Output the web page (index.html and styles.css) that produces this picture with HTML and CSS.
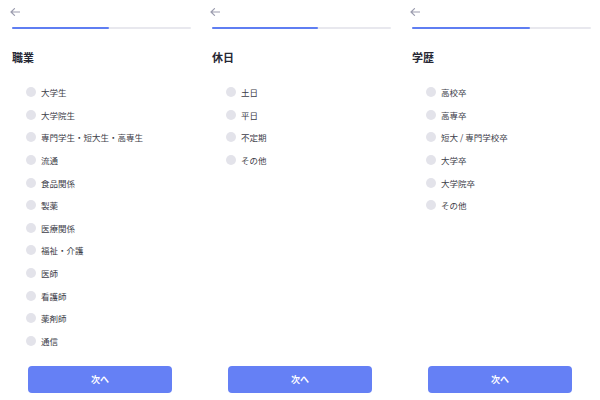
FILE: index.html
```html
<!DOCTYPE html>
<html lang="ja">
<head>
<meta charset="utf-8">
<link rel="stylesheet" href="styles.css">
</head>
<body>
<div class="screens">
  <section class="panel">
    <svg class="back" viewBox="0 0 10 8" width="10" height="8"><path d="M9.5 4H1M4.5 0.6L1 4l3.5 3.4" fill="none" stroke="#9b9cae" stroke-width="1.2" stroke-linecap="round" stroke-linejoin="round"/></svg>
    <div class="progress"><div class="fill" style="width:54%"></div></div>
    <h2 class="title">職業</h2>
    <ul class="options">
      <li><span class="radio"></span>大学生</li>
      <li><span class="radio"></span>大学院生</li>
      <li><span class="radio"></span>専門学生・短大生・高専生</li>
      <li><span class="radio"></span>流通</li>
      <li><span class="radio"></span>食品関係</li>
      <li><span class="radio"></span>製薬</li>
      <li><span class="radio"></span>医療関係</li>
      <li><span class="radio"></span>福祉・介護</li>
      <li><span class="radio"></span>医師</li>
      <li><span class="radio"></span>看護師</li>
      <li><span class="radio"></span>薬剤師</li>
      <li><span class="radio"></span>通信</li>
    </ul>
    <button class="next">次へ</button>
  </section>
  <section class="panel">
    <svg class="back" viewBox="0 0 10 8" width="10" height="8"><path d="M9.5 4H1M4.5 0.6L1 4l3.5 3.4" fill="none" stroke="#9b9cae" stroke-width="1.2" stroke-linecap="round" stroke-linejoin="round"/></svg>
    <div class="progress"><div class="fill" style="width:59%"></div></div>
    <h2 class="title">休日</h2>
    <ul class="options">
      <li><span class="radio"></span>土日</li>
      <li><span class="radio"></span>平日</li>
      <li><span class="radio"></span>不定期</li>
      <li><span class="radio"></span>その他</li>
    </ul>
    <button class="next">次へ</button>
  </section>
  <section class="panel">
    <svg class="back" viewBox="0 0 10 8" width="10" height="8"><path d="M9.5 4H1M4.5 0.6L1 4l3.5 3.4" fill="none" stroke="#9b9cae" stroke-width="1.2" stroke-linecap="round" stroke-linejoin="round"/></svg>
    <div class="progress"><div class="fill" style="width:66%"></div></div>
    <h2 class="title">学歴</h2>
    <ul class="options">
      <li><span class="radio"></span>高校卒</li>
      <li><span class="radio"></span>高専卒</li>
      <li><span class="radio"></span>短大 / 専門学校卒</li>
      <li><span class="radio"></span>大学卒</li>
      <li><span class="radio"></span>大学院卒</li>
      <li><span class="radio"></span>その他</li>
    </ul>
    <button class="next">次へ</button>
  </section>
</div>
</body>
</html>
```

FILE: styles.css
```css
* { box-sizing: border-box; }
html, body {
  margin: 0;
  padding: 0;
  background: #ffffff;
  font-family: "Noto Sans CJK JP", "Noto Sans", sans-serif;
}
.screens {
  display: flex;
  gap: 21px;
  padding-left: 12px;
  width: 600px;
  height: 400px;
  overflow: hidden;
}
.panel {
  width: 179px;
  height: 400px;
  display: flex;
  flex-direction: column;
  padding-top: 8px;
  padding-bottom: 7px;
}
.back {
  display: block;
  margin-left: -2px;
}
.progress {
  margin-top: 11px;
  height: 2px;
  background: #e8e8ee;
  border-radius: 1px;
}
.fill {
  height: 100%;
  background: #5f7ef2;
  border-radius: 1px;
}
.title {
  margin: 20px 0 0;
  font-size: 11px;
  line-height: 16px;
  font-weight: 700;
  color: #262734;
}
.options {
  list-style: none;
  margin: 15.7px 0 0;
  padding: 0;
}
.options li {
  height: 22.65px;
  display: flex;
  align-items: center;
  padding-left: 14px;
  font-size: 8.5px;
  color: #3c3d48;
}
.radio {
  width: 10px;
  height: 10px;
  border-radius: 50%;
  background: #e3e3ea;
  margin-right: 5px;
  flex: none;
}
.next {
  margin-top: auto;
  margin-left: 16px;
  width: 144px;
  height: 27px;
  border: none;
  border-radius: 4px;
  background: #6580f5;
  color: #ffffff;
  font-family: inherit;
  font-size: 9px;
  font-weight: 700;
}
```
